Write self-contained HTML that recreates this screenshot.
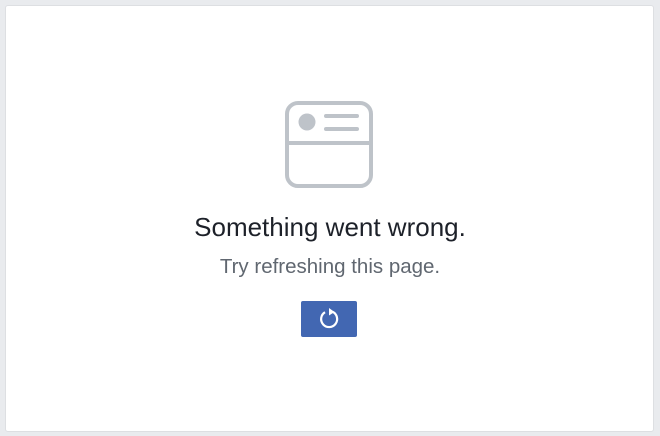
<!DOCTYPE html>
<html><head><style>
html,body{margin:0;padding:0;width:660px;height:436px;background:#e9ebee;overflow:hidden;font-family:"Liberation Sans",Arial,sans-serif}
.card{position:absolute;left:5px;top:5px;width:647px;height:425px;background:#fff;border:1px solid #dddfe2;border-radius:3px}
.t1{position:absolute;left:0;width:660px;top:212px;text-align:center;font-size:26px;color:#1d2129;line-height:30px}
.t2{position:absolute;left:0;width:660px;top:255px;text-align:center;font-size:20.5px;color:#606770;line-height:24px}
.btn{position:absolute;left:301px;top:301px;width:56px;height:36px;background:#4267b2;border-radius:2px}
</style></head><body>
<div class="card"></div>
<svg style="position:absolute;left:0;top:0" width="660" height="436">
<g fill="none" stroke="#bec3c9" stroke-width="4" stroke-linecap="round">
<rect x="287" y="103" width="84" height="83" rx="11"/>
<line x1="287" y1="143" x2="371" y2="143"/>
<line x1="326" y1="116" x2="357" y2="116"/>
<line x1="326" y1="129" x2="357" y2="129"/>
</g>
<circle cx="307" cy="122" r="8.5" fill="#bec3c9"/>
</svg>
<div class="t1">Something went wrong.</div>
<div class="t2">Try refreshing this page.</div>
<div class="btn"></div>
<svg style="position:absolute;left:0;top:0" width="660" height="436">
<path d="M325 312.2 A8 8 0 1 0 332.5 311.8" fill="none" stroke="#fff" stroke-width="2.2"/>
<path d="M329 308 L334.5 312 L329 315.5 Z" fill="#fff"/>
</svg>
</body></html>
